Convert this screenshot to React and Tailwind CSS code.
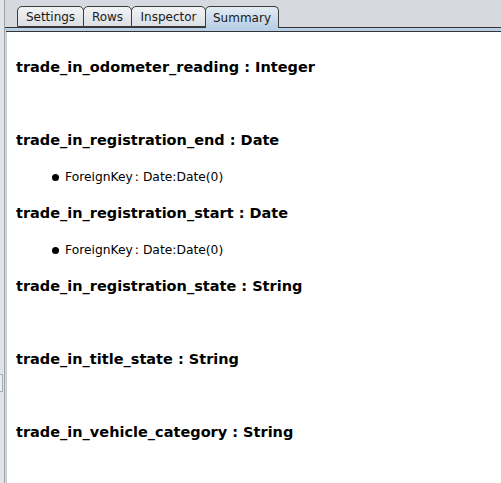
const font = { fontFamily: '"DejaVu Sans", "Liberation Sans", sans-serif' }

const tabs = [
  { label: 'Settings', w: 'w-[67px]' },
  { label: 'Rows', w: 'w-[49px]' },
  { label: 'Inspector', w: 'w-[75px]' },
  { label: 'Summary', w: 'w-[74px]', active: true },
]

const fields = [
  { name: 'trade_in_odometer_reading', type: 'Integer' },
  { name: 'trade_in_registration_end', type: 'Date', fk: 'Date:Date(0)' },
  { name: 'trade_in_registration_start', type: 'Date', fk: 'Date:Date(0)' },
  { name: 'trade_in_registration_state', type: 'String' },
  { name: 'trade_in_title_state', type: 'String' },
  { name: 'trade_in_vehicle_category', type: 'String' },
]

function Tab({ label, w, active }) {
  return (
    <div
      className={`${w} h-[21px] -ml-px first:ml-0 flex items-center justify-center text-[12px] text-[#1a1a1a] border border-[#3c3c3c] rounded-t-[5px] ${
        active
          ? 'border-b-0 h-[22px] -mb-px bg-gradient-to-b from-[#e4ecf3] to-[#b8cfe5] relative z-10'
          : 'bg-gradient-to-b from-[#f2f3f5] to-[#dcdfe4]'
      }`}
    >
      {label}
    </div>
  )
}

export default function App() {
  return (
    <div className="w-[501px] h-[483px] flex overflow-hidden bg-[#d6d9df]" style={font}>
      {/* left divider strip */}
      <div className="w-[5px] h-full flex-shrink-0 bg-[#e3e4e7] border-r border-[#9da3ab] flex flex-col">
        <div className="h-[374px] flex-shrink-0" />
        <div className="h-[18px] w-[3px] flex-shrink-0 border border-l-0 border-[#a7adb5] bg-[#eceef0]" />
      </div>

      <div className="flex-1 flex flex-col min-w-0">
        {/* tab row */}
        <div className="h-[28px] flex-shrink-0 flex items-end pl-[12px] border-b border-[#333]">
          {tabs.map((t) => (
            <Tab key={t.label} {...t} />
          ))}
        </div>
        <div className="h-[3px] flex-shrink-0 bg-[#b8cfe5]" />
        <div className="h-px flex-shrink-0 bg-[#333] ml-[1px]" />

        {/* summary content */}
        <div className="flex-1 min-h-0 overflow-hidden ml-[1px] border-l border-[#c8ccd2] bg-white pt-[18px] pl-[9px]">
          {fields.map((f) => (
            <div key={f.name}>
              <div className="h-[36px] flex items-center text-[14.5px] font-bold text-black whitespace-nowrap">
                {f.name} : {f.type}
              </div>
              <div className="h-[37px] flex items-center pl-[36px] text-[12.3px] text-black whitespace-nowrap">
                {f.fk && (
                  <>
                    <span className="w-[7px] h-[7px] rounded-full bg-black mr-[6px]" />
                    ForeignKey<span className="ml-[2px]">: {f.fk}</span>
                  </>
                )}
              </div>
            </div>
          ))}
        </div>
      </div>
    </div>
  )
}
